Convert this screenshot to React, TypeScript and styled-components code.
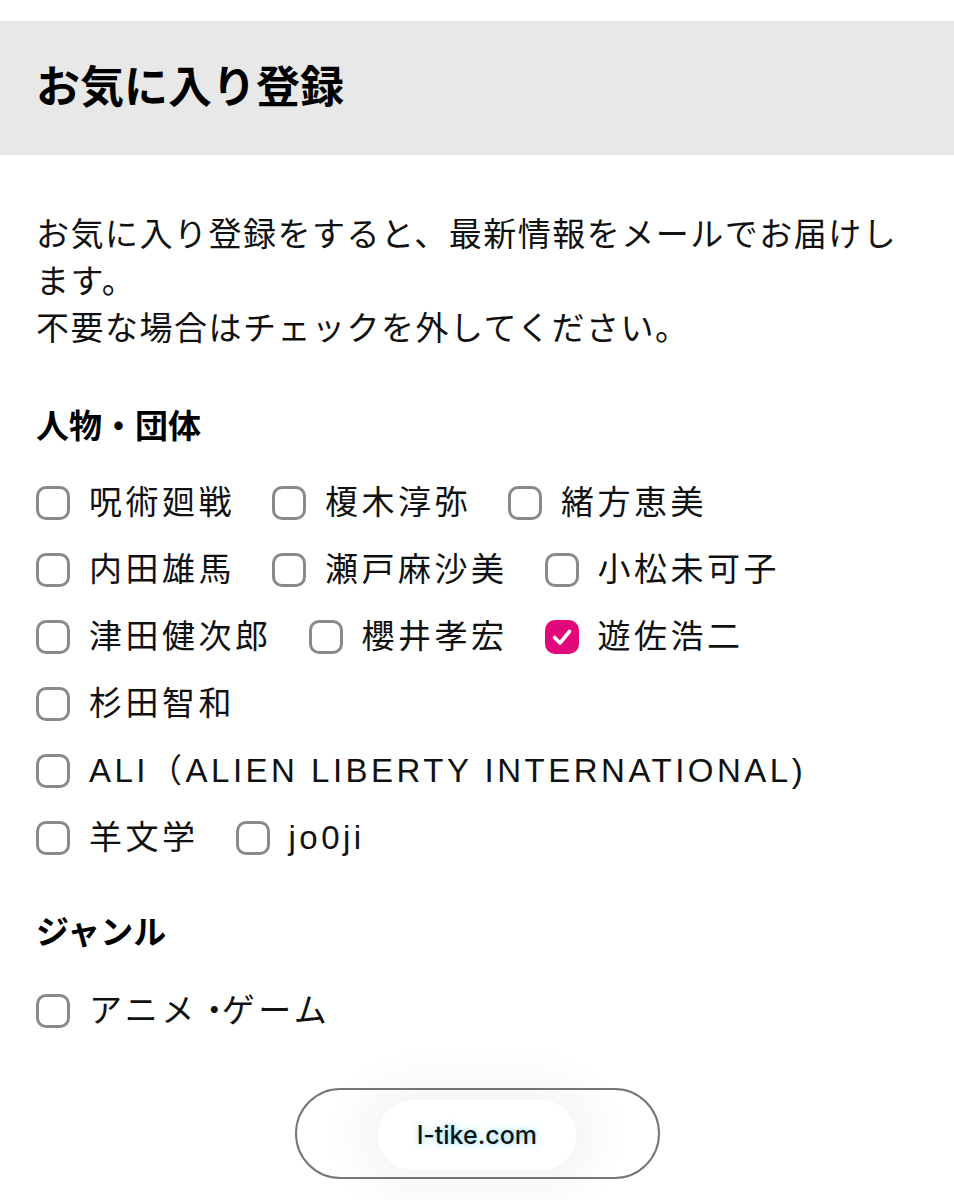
import { useState } from "react";
import styled, { createGlobalStyle } from "styled-components";

const GlobalStyle = createGlobalStyle`
  body {
    margin: 0;
    background: #fff;
    color: #111;
    font-family: "Liberation Sans", "Noto Sans CJK JP", sans-serif;
  }
`;

const Page = styled.div`
  position: relative;
  width: 954px;
  min-height: 1200px;
  padding-top: 21px;
  box-sizing: border-box;
`;

const Header = styled.header`
  height: 134px;
  background: #e8e8e8;
  padding: 0 36px;
  display: flex;
  align-items: center;
`;

const Title = styled.h1`
  margin: 0;
  font-size: 44px;
  font-weight: 700;
  line-height: 1;
  color: #000;
`;

const Content = styled.div`
  padding: 0 36px;
`;

const Intro = styled.p`
  margin: 56px 0 0;
  font-size: 33px;
  letter-spacing: 1.5px;
  line-height: 47px;
`;

const SectionTitle = styled.h2<{ $top: number }>`
  margin: ${(p) => p.$top}px 0 0;
  font-size: 33px;
  font-weight: 700;
  line-height: 47px;
  color: #000;
`;

// the middle dot in labels is set narrow in the original
const Mid = styled.span`
  letter-spacing: -9px;
`;

const CheckList = styled.div<{ $top: number }>`
  margin-top: ${(p) => p.$top}px;
  display: flex;
  flex-wrap: wrap;
  row-gap: 20px;
  column-gap: 37px;
`;

const Item = styled.label`
  display: flex;
  align-items: center;
  height: 47px;
  cursor: pointer;
`;

const Box = styled.span<{ $on: boolean }>`
  width: 34px;
  height: 34px;
  box-sizing: border-box;
  border-radius: 10px;
  border: ${(p) => (p.$on ? "none" : "3px solid #8a8a8a")};
  background: ${(p) => (p.$on ? "#e2077a" : "#fff")};
  display: flex;
  align-items: center;
  justify-content: center;
  flex-shrink: 0;
`;

const Label = styled.span`
  margin-left: 19px;
  font-size: 33px;
  letter-spacing: 3.5px;
  line-height: 47px;
  white-space: nowrap;
`;

const ButtonRow = styled.div`
  margin-top: 54px;
  display: flex;
  justify-content: center;
  padding-bottom: 21px;
`;

const OutlineButton = styled.button`
  width: 365px;
  height: 91px;
  border: 2px solid #777;
  border-radius: 46px;
  background: #fff;
`;

const UrlBar = styled.div`
  position: absolute;
  left: 378px;
  bottom: 30px;
  width: 198px;
  height: 70px;
  border-radius: 35px;
  background: rgba(255, 255, 255, 0.96);
  box-shadow: 0 0 40px 24px rgba(0, 0, 0, 0.04);
  display: flex;
  align-items: center;
  justify-content: center;
  font-family: "Inter", "Liberation Sans", sans-serif;
  font-size: 25px;
  font-weight: 500;
  color: #111;
  text-shadow: 0 0 6px rgba(60, 210, 255, 0.7);
`;

const people = [
  "呪術廻戦",
  "榎木淳弥",
  "緒方恵美",
  "内田雄馬",
  "瀬戸麻沙美",
  "小松未可子",
  "津田健次郎",
  "櫻井孝宏",
  "遊佐浩二",
  "杉田智和",
  "ALI（ALIEN LIBERTY INTERNATIONAL)",
  "羊文学",
  "jo0ji",
];

const withDots = (text: string) =>
  text.split("・").flatMap((part, i) => (i === 0 ? [part] : [<Mid key={i}>・</Mid>, part]));

const Check = () => (
  <svg width="24" height="24" viewBox="0 0 24 24" fill="none">
    <path d="M4.5 12.5 L10 18 L19.5 6.5" stroke="#fff" strokeWidth="3.6" strokeLinecap="round" strokeLinejoin="round" />
  </svg>
);

export default function App() {
  const [checked, setChecked] = useState<Record<string, boolean>>({ 遊佐浩二: true });
  const toggle = (name: string) => setChecked((c) => ({ ...c, [name]: !c[name] }));

  const renderItem = (name: string) => (
    <Item key={name} onClick={() => toggle(name)}>
      <Box $on={!!checked[name]}>{checked[name] && <Check />}</Box>
      <Label>{withDots(name)}</Label>
    </Item>
  );

  return (
    <Page>
      <GlobalStyle />
      <Header>
        <Title>お気に入り登録</Title>
      </Header>
      <Content>
        <Intro>
          お気に入り登録をすると、最新情報をメールでお届けします。
          <br />
          不要な場合はチェックを外してください。
        </Intro>
        <SectionTitle $top={51}>人物・団体</SectionTitle>
        <CheckList $top={29}>{people.map(renderItem)}</CheckList>
        <SectionTitle $top={48}>ジャンル</SectionTitle>
        <CheckList $top={31}>{renderItem("アニメ・ゲーム")}</CheckList>
        <ButtonRow>
          <OutlineButton />
        </ButtonRow>
      </Content>
      <UrlBar>l-tike.com</UrlBar>
    </Page>
  );
}
